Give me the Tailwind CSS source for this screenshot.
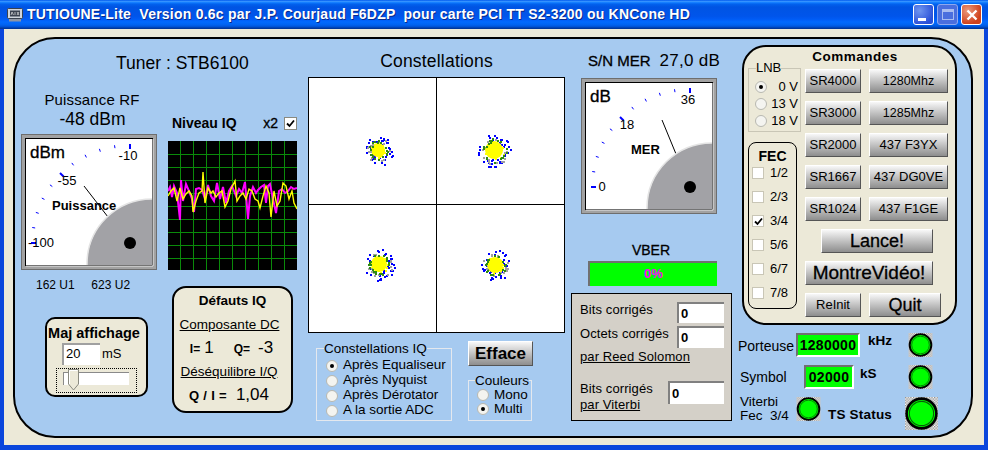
<!DOCTYPE html>
<html lang="fr">
<head>
    <meta charset="UTF-8" />
    <title>TUTIOUNE-Lite</title>
    <script src="https://cdn.jsdelivr.net/npm/@tailwindcss/browser@4"></script>
</head>
<body class="w-[988px] h-[450px] overflow-hidden font-['Liberation_Sans',sans-serif] text-black">
    <!-- shared led symbol -->
    <svg width="0" height="0" class="absolute">
        <defs>
            <pattern id="dots" width="2" height="2" patternUnits="userSpaceOnUse">
                <rect width="2" height="2" fill="#ffffff" />
                <rect width="1" height="1" fill="#8c8c8c" />
                <rect x="1" y="1" width="1" height="1" fill="#8c8c8c" />
            </pattern>
            <symbol id="led" viewBox="0 0 25 25">
                <rect width="25" height="25" fill="url(#dots)" />
                <circle cx="12.5" cy="12.5" r="11.3" fill="#00ff00" stroke="#000" stroke-width="2" />
                <circle cx="12.5" cy="12.5" r="9.2" fill="none" stroke="#0a5c0a" stroke-width="0.8" />
            </symbol>
        </defs>
    </svg>

    <div class="w-[988px] h-[450px] flex flex-col">
        <!-- title bar -->
        <div class="h-[29px] shrink-0 flex items-center pl-[7px] pr-[6px] bg-[linear-gradient(to_bottom,#0058ee_0%,#3593ff_5%,#127dff_9%,#0262ee_14%,#0054e3_24%,#0055eb_56%,#005bf5_66%,#026afe_76%,#0062ef_86%,#0052d6_92%,#0040ab_96%,#003092_100%)]">
            <svg width="16" height="14" viewBox="0 0 16 14" class="shrink-0">
                <rect x="0.5" y="0.5" width="15" height="10" rx="1" fill="#cfd4dc" stroke="#39424f" />
                <rect x="3" y="2.5" width="10" height="6" fill="#3a4250" />
                <path d="M4 7l1-3 1.5 3M8 4v3M10 4l2 3M12 4l-2 3" stroke="#e6e6e6" stroke-width="0.7" fill="none" />
                <rect x="2" y="11" width="12" height="2.5" fill="#8d95a3" />
            </svg>
            <span class="ml-[4px] text-white font-bold text-[14px] whitespace-pre tracking-[0.23px] [text-shadow:1px_1px_0_#0a2a8a]">TUTIOUNE-Lite  Version 0.6c par J.P. Courjaud F6DZP  pour carte PCI TT S2-3200 ou KNCone HD</span>
            <div class="ml-auto flex gap-[3px]">
                <div class="w-[21px] h-[21px] rounded-[3px] border border-white bg-[radial-gradient(circle_at_30%_30%,#6f95ef,#2a50d8_75%)] flex items-end pl-[4px] pb-[3px]">
                    <div class="w-[8px] h-[3px] bg-white"></div>
                </div>
                <div class="w-[21px] h-[21px] rounded-[3px] border border-[#8fa8ee] bg-[#4a6ede] flex items-center justify-center">
                    <div class="w-[12px] h-[11px] border border-[#a9bcf0] border-t-[3px]"></div>
                </div>
                <div class="w-[21px] h-[21px] rounded-[3px] border border-white bg-[radial-gradient(circle_at_30%_30%,#ec9a7d,#d0421c_70%)] flex items-center justify-center">
                    <svg width="12" height="12" viewBox="0 0 12 12"><path d="M1.5 1.5l9 9M10.5 1.5l-9 9" stroke="#fff" stroke-width="2.4" /></svg>
                </div>
            </div>
        </div>

        <!-- client area -->
        <div class="flex-1 bg-[#ece9d8] border-x-4 border-b-[5px] border-[#0a46dc] pl-[9px] pt-[8px]">
            <div class="w-[960px] h-[401px] rounded-[42px] border-2 border-black bg-[#a6caf0] flex">

                <!-- tuner, power gauge, IQ level -->
                <div class="w-[287px] shrink-0">
                    <div class="h-[48px] pl-[101px] flex items-center text-[17.5px] whitespace-pre">Tuner : STB6100</div>
                    <div class="flex">
                        <div class="w-[136px] ml-[6px]">
                            <div class="mt-[3px] h-[19px] leading-[19px] text-center text-[15px] tracking-[0.15px] pl-[6px]">Puissance RF</div>
                            <div class="h-[20px] leading-[20px] text-center text-[17.5px] pl-[7px]">-48 dBm</div>
                            <svg width="136" height="136" viewBox="0 0 136 136" class="mt-[5px] block">
                                <clipPath id="clipA"><rect x="5" y="5" width="126" height="126" /></clipPath>
                                <rect x="0.5" y="0.5" width="135" height="135" fill="#a2a2a2" stroke="#6e6e6e" />
                                <rect x="4.5" y="4.5" width="127" height="127" fill="#fff" stroke="#000" />
                                <path d="M132 5V132H5" fill="none" stroke="#e8e8e8" />
                                <g class="ticks"></g>
                                <path d="M63 52L87 83" stroke="#000" />
                                <circle cx="131" cy="130" r="65" fill="#a2a2a6" stroke="#e4e4e4" stroke-width="1.5" clip-path="url(#clipA)" />
                                <circle cx="109" cy="109" r="6" fill="#000" />
                                <text x="9" y="24" font-size="17" stroke="#000" stroke-width="0.3">dBm</text>
                                <text x="107" y="26" text-anchor="middle" font-size="13">-10</text>
                                <text x="46" y="51" text-anchor="middle" font-size="13">-55</text>
                                <text x="31" y="76" font-size="13" font-weight="bold">Puissance</text>
                                <text x="7" y="113" font-size="13">-100</text>
                            </svg>
                            <div class="mt-[7px] h-[16px] leading-[16px] text-[12px] pl-[15px] whitespace-pre">162 U1     623 U2</div>
                            <div class="mt-[24px] ml-[24px] w-[103px] h-[80px] rounded-[10px] border-2 border-black bg-[#ece9d8] relative">
                                <div class="text-center font-bold text-[14.5px] leading-[16px] mt-[6px] whitespace-nowrap pr-[5px]">Maj affichage</div>
                                <div class="flex items-center ml-[15px] mt-[2px]">
                                    <div class="w-[38px] h-[22px] bg-white border-t-2 border-l-2 border-[#a0a0a0] pl-[2px] text-[13px] leading-[18px]">20</div>
                                    <span class="ml-[2px] text-[13px]">mS</span>
                                </div>
                                <!-- slider -->
                                <div class="absolute left-[9px] top-[49px] w-[81px] h-[25px] border border-dotted border-black">
                                    <div class="ml-[6px] mt-[3px] w-[66px] h-[13px] bg-white border-t border-l border-[#8a8a8a]"></div>
                                    <svg width="11" height="22" viewBox="0 0 11 22" class="absolute left-[11px] top-0">
                                        <path d="M0.5 0.5H10.5V15L5.5 21L0.5 15Z" fill="#ece9d8" stroke="#8a8a80" />
                                        <path d="M1.5 15V1.5H9.5" stroke="#fff" fill="none" />
                                    </svg>
                                </div>
                            </div>
                        </div>
                        <div class="w-[129px] ml-[11px]">
                            <div class="mt-[27px] h-[18px] flex items-center">
                                <span class="ml-[4px] w-[68px] whitespace-nowrap font-bold text-[14px]">Niveau IQ</span>
                                <span class="ml-[24px] w-[14px] text-[14px] [-webkit-text-stroke:0.3px_black]">x2</span>
                                <div class="ml-[7px] w-[13px] h-[13px] bg-white border border-[#8a8a80] flex items-center justify-center">
                                    <svg width="9" height="9" viewBox="0 0 9 9"><path d="M1 4.5l2.5 2.5L8 1.5" stroke="#000" stroke-width="1.8" fill="none" /></svg>
                                </div>
                            </div>
                            <svg width="129" height="129" viewBox="0 0 129 129" class="mt-[9px] block bg-black">
                                <path d="M12.5 0V129M25.5 0V129M38.5 0V129M51.5 0V129M64.5 0V129M77.5 0V129M90.5 0V129M103.5 0V129M116.5 0V129M0 13.5H129M0 26.5H129M0 39.5H129M0 52.5H129M0 65.5H129M0 78.5H129M0 91.5H129M0 104.5H129M0 117.5H129" stroke="#0a8a0a" stroke-width="1" />
                                <polyline fill="none" stroke="#ff00ff" stroke-width="2" points="0,50 2,46 4,56 6,45 9,52 12,79 13,39 15,60 18,43 21,50 24,58 26,71 28,48 31,47 34,49 37,58 40,44 43,55 46,60 49,42 52,58 55,46 58,62 61,50 64,45 68,55 71,48 74,52 77,41 80,78 82,55 85,46 88,52 90,49 93,46 96,44 98,62 100,45 102,43 105,58 108,72 111,50 114,48 117,52 120,50 123,46 126,48 129,47" />
                                <polyline fill="none" stroke="#ffff00" stroke-width="1.4" points="0,55 3,50 6,47 9,60 12,47 15,58 18,53 21,50 24,55 25,71 28,60 31,52 34,50 35,31 37,62 40,47 43,52 45,50 48,56 51,52 54,50 57,66 60,60 63,48 67,40 69,60 72,55 75,52 78,58 81,48 84,50 87,58 90,60 92,67 95,55 98,45 101,52 103,76 106,50 109,65 112,60 115,42 118,45 121,58 124,50 126,62 129,68" />
                            </svg>
                            <div class="mt-[16px] ml-[4px] w-[121px] h-[127px] rounded-[14px] border-2 border-black bg-[#ece9d8] flex flex-col items-center">
                                <div class="mt-[5px] h-[16px] leading-[16px] font-bold text-[13.5px]">Défauts IQ</div>
                                <div class="mt-[8px] h-[16px] leading-[16px] text-[13.5px] underline pr-[6px]">Composante DC</div>
                                <div class="mt-[6px] h-[18px] leading-[18px] flex items-baseline text-[15px] pr-[2px]">
                                    <span class="font-bold text-[12px]">I=</span><span class="ml-[4px] text-[17px]">1</span>
                                    <span class="ml-[20px] font-bold text-[12px]">Q=</span><span class="ml-[8px] text-[17px]">-3</span>
                                </div>
                                <div class="mt-[7px] h-[16px] leading-[16px] text-[13.5px] underline pr-[7px]">Déséquilibre I/Q</div>
                                <div class="mt-[6px] h-[18px] leading-[18px] flex items-baseline pr-[7px]">
                                    <span class="font-bold text-[13px] tracking-[0.3px] whitespace-pre">Q / I =</span><span class="ml-[9px] text-[17px]">1,04</span>
                                </div>
                            </div>
                        </div>
                    </div>
                </div>

                <!-- constellations -->
                <div class="w-[257px] ml-[6px] shrink-0">
                    <div class="h-[38px] pt-[5px] text-center text-[17.5px] leading-[34px] tracking-[0.2px]">Constellations</div>
                    <svg id="plot" width="257" height="256" viewBox="0 0 257 256" class="block">
                        <rect x="0.5" y="0.5" width="256" height="255" fill="#fff" stroke="#000" />
                        <path d="M128.5 0V256M0 127.5H257" stroke="#000" />
                    </svg>
                    <div class="flex">
                        <fieldset class="mt-[8px] ml-[8px] w-[136px] h-[80px] border border-[#e4e8ee] outline-0 pl-[9px]">
                            <legend class="text-[13.5px] leading-[15px] px-0 -ml-[2px]">Constellations IQ</legend>
                            <div class="flex items-center h-[15px] mt-[2px] text-[13.5px]"><span class="w-[12px] h-[12px] rounded-full bg-[#f4f4f0] border border-[#b8b8b0] flex items-center justify-center"><span class="w-[4px] h-[4px] rounded-full bg-black"></span></span><span class="ml-[5px]">Après Equaliseur</span></div>
                            <div class="flex items-center h-[15px] text-[13.5px]"><span class="w-[12px] h-[12px] rounded-full bg-[#f4f4f0] border border-[#b8b8b0]"></span><span class="ml-[5px]">Après Nyquist</span></div>
                            <div class="flex items-center h-[15px] text-[13.5px]"><span class="w-[12px] h-[12px] rounded-full bg-[#f4f4f0] border border-[#b8b8b0]"></span><span class="ml-[5px]">Après Dérotator</span></div>
                            <div class="flex items-center h-[15px] text-[13.5px]"><span class="w-[12px] h-[12px] rounded-full bg-[#f4f4f0] border border-[#b8b8b0]"></span><span class="ml-[5px]">A la sortie ADC</span></div>
                        </fieldset>
                        <div class="ml-[16px] w-[65px]">
                            <div class="mt-[8px] h-[25px] bg-linear-to-b from-[#f8f8f8] to-[#8e8e8e] border-t border-l border-white border-r border-b border-r-[#555] border-b-[#555] text-center font-bold text-[17px] leading-[24px]">Efface</div>
                            <fieldset class="mt-[7px] w-[64px] h-[48px] border border-[#e4e8ee] pl-[8px]">
                                <legend class="text-[13.5px] leading-[15px] -ml-[2px]">Couleurs</legend>
                                <div class="flex items-center h-[14px] text-[13.5px]"><span class="w-[12px] h-[12px] rounded-full bg-[#f4f4f0] border border-[#b8b8b0]"></span><span class="ml-[5px]">Mono</span></div>
                                <div class="flex items-center h-[14px] text-[13.5px]"><span class="w-[12px] h-[12px] rounded-full bg-[#f4f4f0] border border-[#b8b8b0] flex items-center justify-center"><span class="w-[4px] h-[4px] rounded-full bg-black"></span></span><span class="ml-[5px]">Multi</span></div>
                            </fieldset>
                        </div>
                    </div>
                </div>

                <!-- MER gauge, VBER, error counters -->
                <div class="w-[161px] ml-[6px] shrink-0">
                    <div class="h-[39px] pt-[14px] pl-[17px] flex items-baseline leading-[16px] whitespace-pre">
                        <span class="text-[15px] [-webkit-text-stroke:0.3px_black]">S/N MER</span><span class="ml-[9px] text-[17px] tracking-[0.3px]">27,0 dB</span>
                    </div>
                    <svg width="136" height="136" viewBox="0 0 136 136" class="ml-[10px] block">
                        <clipPath id="clipB"><rect x="5" y="5" width="126" height="126" /></clipPath>
                        <rect x="0.5" y="0.5" width="135" height="135" fill="#a2a2a2" stroke="#6e6e6e" />
                        <rect x="4.5" y="4.5" width="127" height="127" fill="#fff" stroke="#000" />
                        <path d="M132 5V132H5" fill="none" stroke="#e8e8e8" />
                        <g class="ticks"></g>
                        <path d="M81 42L95 76" stroke="#000" />
                        <circle cx="131" cy="130" r="65" fill="#a2a2a6" stroke="#e4e4e4" stroke-width="1.5" clip-path="url(#clipB)" />
                        <circle cx="109" cy="109" r="6" fill="#000" />
                        <text x="9" y="24" font-size="17" stroke="#000" stroke-width="0.3">dB</text>
                        <text x="107" y="26" text-anchor="middle" font-size="13">36</text>
                        <text x="46" y="51" text-anchor="middle" font-size="13">18</text>
                        <text x="50" y="76" font-size="13" font-weight="bold">MER</text>
                        <text x="21" y="113" text-anchor="middle" font-size="13">0</text>
                    </svg>
                    <div class="mt-[28px] h-[16px] leading-[16px] text-center text-[14px] pr-[1px] [-webkit-text-stroke:0.3px_black]">VBER</div>
                    <div class="mt-[3px] ml-[17px] w-[129px] h-[25px] bg-[#00ff00] border-t-2 border-l-2 border-[#707070] text-center text-[#ff00ff] font-bold text-[13px] leading-[22px]">0%</div>
                    <div class="mt-[7px] h-[128px] bg-[#d4d0c8] border border-black pl-[8px] text-[13px] tracking-[0.1px]">
                        <div class="mt-[8px] flex items-center h-[21px] justify-between pr-[7px]">
                            <span class="-mt-[6px]">Bits corrigés</span>
                            <div class="w-[47px] h-[21px] bg-white border-t-2 border-l-2 border-[#808080] font-bold pl-[2px] leading-[19px]">0</div>
                        </div>
                        <div class="mt-[3px] flex items-center h-[22px] justify-between pr-[7px]">
                            <span class="-mt-[6px]">Octets corrigés</span>
                            <div class="w-[47px] h-[22px] bg-white border-t-2 border-l-2 border-[#808080] font-bold pl-[2px] leading-[20px]">0</div>
                        </div>
                        <div class="mt-[1px] h-[16px] leading-[16px] underline">par Reed Solomon</div>
                        <div class="mt-[16px] flex justify-between pr-[7px]">
                            <div class="leading-[16px]">Bits corrigés<br /><span class="underline">par Viterbi</span></div>
                            <div class="w-[56px] h-[23px] bg-white border-t-2 border-l-2 border-[#808080] font-bold pl-[2px] leading-[21px]">0</div>
                        </div>
                    </div>
                </div>

                <!-- commands and status -->
                <div class="ml-[5px] flex-1">
                    <div class="mt-[6px] ml-[5px] w-[215px] h-[280px] rounded-[24px] border-2 border-black bg-[#ece9d8]">
                        <div class="h-[20px] leading-[20px] text-center font-bold text-[13.5px] tracking-[0.5px] pl-[11px]">Commandes</div>
                        <div class="flex">
                            <div class="ml-[4px] w-[53px] -mt-[6px]">
                                <fieldset class="h-[71px] border border-[#c9c6b6] pl-[6px]">
                                    <legend class="text-[13px] leading-[14px] ml-[1px]">LNB</legend>
                                    <div class="flex items-center h-[17px] mt-[3px] text-[13px]"><span class="w-[12px] h-[12px] rounded-full bg-[#f4f4f0] border border-[#b8b8b0] flex items-center justify-center"><span class="w-[4px] h-[4px] rounded-full bg-black"></span></span><span class="ml-auto pr-[2px]">0 V</span></div>
                                    <div class="flex items-center h-[17px] text-[13px]"><span class="w-[12px] h-[12px] rounded-full bg-[#f4f4f0] border border-[#b8b8b0]"></span><span class="ml-auto pr-[2px]">13 V</span></div>
                                    <div class="flex items-center h-[17px] text-[13px]"><span class="w-[12px] h-[12px] rounded-full bg-[#f4f4f0] border border-[#b8b8b0]"></span><span class="ml-auto pr-[2px]">18 V</span></div>
                                </fieldset>
                                <div class="mt-[10px] w-[49px] h-[167px] rounded-[8px] border border-black pl-[3px]">
                                    <div class="text-center font-bold text-[14px] leading-[16px] mt-[5px] pr-[3px]">FEC</div>
                                    <div class="-mt-[3px] h-[24px] flex items-center text-[13px]"><span class="w-[12px] h-[12px] bg-white border border-[#c9c6b6]"></span><span class="ml-[6px]">1/2</span></div>
                                    <div class="h-[24px] flex items-center text-[13px]"><span class="w-[12px] h-[12px] bg-white border border-[#c9c6b6]"></span><span class="ml-[6px]">2/3</span></div>
                                    <div class="h-[24px] flex items-center text-[13px]"><span class="w-[12px] h-[12px] bg-white border border-[#c9c6b6] flex items-center justify-center"><svg width="9" height="9" viewBox="0 0 9 9"><path d="M1 4.5l2.5 2.5L8 1.5" stroke="#000" stroke-width="1.8" fill="none" /></svg></span><span class="ml-[6px]">3/4</span></div>
                                    <div class="h-[24px] flex items-center text-[13px]"><span class="w-[12px] h-[12px] bg-white border border-[#c9c6b6]"></span><span class="ml-[6px]">5/6</span></div>
                                    <div class="h-[24px] flex items-center text-[13px]"><span class="w-[12px] h-[12px] bg-white border border-[#c9c6b6]"></span><span class="ml-[6px]">6/7</span></div>
                                    <div class="h-[24px] flex items-center text-[13px]"><span class="w-[12px] h-[12px] bg-white border border-[#c9c6b6]"></span><span class="ml-[6px]">7/8</span></div>
                                </div>
                            </div>
                            <div class="ml-[4px] mt-[2px] w-[143px] flex flex-col gap-[8px]">
                                <div class="grid grid-cols-[56px_79px] gap-x-[8px] gap-y-[8px] auto-rows-[24px] text-[13px] text-center">
                                    <div class="bg-linear-to-b from-[#f8f8f8] to-[#8e8e8e] border border-t-white border-l-white border-r-[#555] border-b-[#555] leading-[22px]">SR4000</div>
                                    <div class="bg-linear-to-b from-[#f8f8f8] to-[#8e8e8e] border border-t-white border-l-white border-r-[#555] border-b-[#555] leading-[22px] text-[12.5px]">1280Mhz</div>
                                    <div class="bg-linear-to-b from-[#f8f8f8] to-[#8e8e8e] border border-t-white border-l-white border-r-[#555] border-b-[#555] leading-[22px]">SR3000</div>
                                    <div class="bg-linear-to-b from-[#f8f8f8] to-[#8e8e8e] border border-t-white border-l-white border-r-[#555] border-b-[#555] leading-[22px] text-[12.5px]">1285Mhz</div>
                                    <div class="bg-linear-to-b from-[#f8f8f8] to-[#8e8e8e] border border-t-white border-l-white border-r-[#555] border-b-[#555] leading-[22px]">SR2000</div>
                                    <div class="bg-linear-to-b from-[#f8f8f8] to-[#8e8e8e] border border-t-white border-l-white border-r-[#555] border-b-[#555] leading-[22px]">437 F3YX</div>
                                    <div class="bg-linear-to-b from-[#f8f8f8] to-[#8e8e8e] border border-t-white border-l-white border-r-[#555] border-b-[#555] leading-[22px]">SR1667</div>
                                    <div class="bg-linear-to-b from-[#f8f8f8] to-[#8e8e8e] border border-t-white border-l-white border-r-[#555] border-b-[#555] leading-[22px] whitespace-nowrap">437 DG0VE</div>
                                    <div class="bg-linear-to-b from-[#f8f8f8] to-[#8e8e8e] border border-t-white border-l-white border-r-[#555] border-b-[#555] leading-[22px]">SR1024</div>
                                    <div class="bg-linear-to-b from-[#f8f8f8] to-[#8e8e8e] border border-t-white border-l-white border-r-[#555] border-b-[#555] leading-[22px]">437 F1GE</div>
                                </div>
                                <div class="ml-[16px] w-[112px] h-[24px] bg-linear-to-b from-[#f8f8f8] to-[#8e8e8e] border border-t-white border-l-white border-r-[#555] border-b-[#555] text-center text-[18px] leading-[22px] [-webkit-text-stroke:0.3px_black]">Lance!</div>
                                <div class="w-[128px] h-[24px] bg-linear-to-b from-[#f8f8f8] to-[#8e8e8e] border border-t-white border-l-white border-r-[#555] border-b-[#555] text-center text-[19px] leading-[22px] [-webkit-text-stroke:0.3px_black]">MontreVidéo!</div>
                                <div class="flex gap-[8px]">
                                    <div class="w-[56px] h-[24px] bg-linear-to-b from-[#f8f8f8] to-[#8e8e8e] border border-t-white border-l-white border-r-[#555] border-b-[#555] text-center text-[13px] leading-[22px]">ReInit</div>
                                    <div class="w-[72px] h-[24px] bg-linear-to-b from-[#f8f8f8] to-[#8e8e8e] border border-t-white border-l-white border-r-[#555] border-b-[#555] text-center text-[18px] leading-[22px] [-webkit-text-stroke:0.3px_black]">Quit</div>
                                </div>
                            </div>
                        </div>
                    </div>

                    <div class="mt-[8px] h-[24px] flex items-center">
                        <span class="w-[59px] pl-[1px] text-[14px] pt-[2px]">Porteuse</span>
                        <div class="w-[64px] h-[24px] bg-[#00ff00] border-2 border-t-[#707070] border-l-[#707070] border-r-white border-b-white text-center font-bold text-[14px] leading-[20px] tracking-[0.3px]">1280000</div>
                        <span class="ml-[8px] w-[40px] font-bold text-[13.5px] -mt-[8px]">kHz</span>
                        <svg width="25" height="24" class="block"><use href="#led" /></svg>
                    </div>
                    <div class="mt-[8px] h-[24px] flex items-center">
                        <span class="w-[67px] pl-[3px] text-[14px]">Symbol</span>
                        <div class="w-[50px] h-[24px] bg-[#00ff00] border-2 border-t-[#707070] border-l-[#707070] border-r-white border-b-white text-center font-bold text-[14px] leading-[20px] tracking-[0.3px]">02000</div>
                        <span class="ml-[6px] w-[48px] font-bold text-[13.5px] -mt-[6px]">kS</span>
                        <svg width="25" height="24" class="block"><use href="#led" /></svg>
                    </div>
                    <div class="mt-[8px] h-[33px] flex">
                        <div class="w-[59px] pl-[3px] text-[13.5px] leading-[14px] -mt-[2px] whitespace-pre">Viterbi<br />Fec  3/4</div>
                        <svg width="25" height="24" class="block"><use href="#led" /></svg>
                        <span class="ml-[7px] w-[77px] font-bold text-[13.5px] mt-[8px] tracking-[0.2px]">TS Status</span>
                        <svg width="33" height="33" class="block"><use href="#led" /></svg>
                    </div>
                </div>
            </div>
        </div>
    </div>

    <script>
        // gauge ticks, 11 of them over a quarter circle round the needle pivot
        document.querySelectorAll('.ticks').forEach(function (g) {
            var out = '';
            for (var i = 0; i <= 10; i++) {
                var a = i * 9 * Math.PI / 180;
                var major = i % 5 === 0;
                var r2 = major ? 94 : 96;
                out += '<line x1="' + (109 - 99 * Math.cos(a)) + '" y1="' + (109 - 99 * Math.sin(a)) +
                    '" x2="' + (109 - r2 * Math.cos(a)) + '" y2="' + (109 - r2 * Math.sin(a)) +
                    '" stroke="#0000ff" stroke-width="' + (major ? 2 : 1) + '"/>';
            }
            g.innerHTML = out;
        });

        // constellation clouds, fixed seed so the picture does not move
        var seed = 12345;
        function rnd() {
            seed = (seed * 1103515 + 12345) % 2147483648;
            return seed / 2147483648;
        }
        function dots(cx, cy, n, rMin, rMax, color, size) {
            var out = '';
            for (var i = 0; i < n; i++) {
                var a = rnd() * Math.PI * 2;
                var r = rMin + rnd() * (rMax - rMin);
                out += '<rect x="' + Math.round(cx + r * Math.cos(a)) + '" y="' + Math.round(cy + r * Math.sin(a)) +
                    '" width="' + size + '" height="' + size + '" fill="' + color + '"/>';
            }
            return out;
        }
        var html = '';
        [[70, 73, 7], [186, 73, 9], [71, 187, 8], [187, 188, 8]].forEach(function (c) {
            html += dots(c[0], c[1], 45, c[2] - 1, c[2] + 8, '#0000ff', 2);
            html += '<circle cx="' + c[0] + '" cy="' + c[1] + '" r="' + c[2] + '" fill="#ffff00"/>';
            html += dots(c[0], c[1], 40, 0, c[2] + 1, '#ffff00', 2);
            html += dots(c[0], c[1], 14, c[2] + 1, c[2] + 5, '#a0a0a0', 2);
            html += dots(c[0], c[1], 20, c[2], c[2] + 3, '#2e8b10', 2);
        });
        document.getElementById('plot').insertAdjacentHTML('beforeend', html);
    </script>
</body>
</html>
